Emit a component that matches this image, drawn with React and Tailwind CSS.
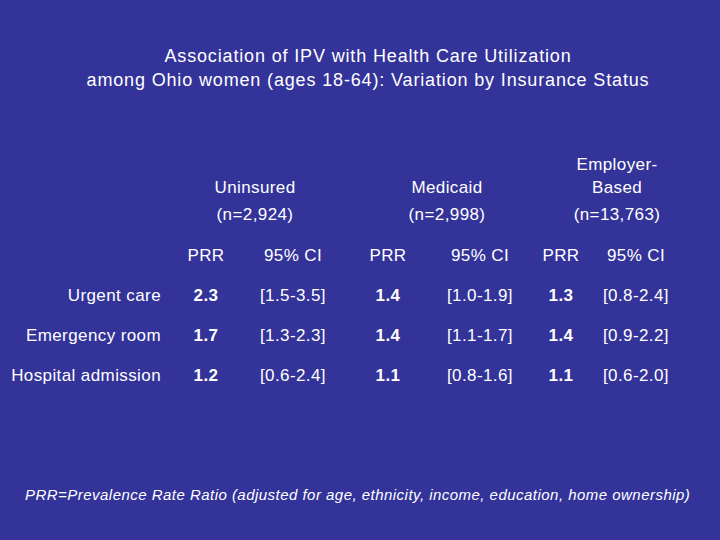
import React from 'react'

const rows = [
  ['Urgent care', '2.3', '[1.5-3.5]', '1.4', '[1.0-1.9]', '1.3', '[0.8-2.4]'],
  ['Emergency room', '1.7', '[1.3-2.3]', '1.4', '[1.1-1.7]', '1.4', '[0.9-2.2]'],
  ['Hospital admission', '1.2', '[0.6-2.4]', '1.1', '[0.8-1.6]', '1.1', '[0.6-2.0]'],
]

const cols = 'grid grid-cols-[170px_72px_102px_88px_96px_66px_84px]'

export default function App() {
  return (
    <div className="w-[720px] h-[540px] bg-[#333399] text-white font-['Liberation_Sans',Arial,sans-serif] overflow-hidden">
      {/* Title */}
      <div className="pt-[44px] pl-[16px] text-center text-[18px] leading-[24px] tracking-[0.85px]">
        <div>Association of IPV with Health Care Utilization</div>
        <div>among Ohio women (ages 18-64): Variation by Insurance Status</div>
      </div>

      {/* Group headers */}
      <div className="mt-[61px] flex items-end text-[17px] leading-[23px] tracking-[0.4px] text-center">
        <div className="w-[170px]" />
        <div className="w-[170px]">Uninsured</div>
        <div className="w-[214px]">Medicaid</div>
        <div className="w-[126px]">
          <div>Employer-</div>
          <div>Based</div>
        </div>
      </div>
      <div className="flex h-[32px] items-center text-[17px] tracking-[0.4px] text-center">
        <div className="w-[170px]" />
        <div className="w-[170px]">(n=2,924)</div>
        <div className="w-[214px]">(n=2,998)</div>
        <div className="w-[126px]">(n=13,763)</div>
      </div>

      {/* Column headers */}
      <div className={`${cols} mt-[5px] h-[40px] items-center text-center text-[17px] tracking-[0.4px]`}>
        <div />
        <div>PRR</div>
        <div>95% CI</div>
        <div>PRR</div>
        <div>95% CI</div>
        <div>PRR</div>
        <div>95% CI</div>
      </div>

      {/* Data */}
      {rows.map((r) => (
        <div key={r[0]} className={`${cols} h-[40px] items-center text-center text-[17px] tracking-[0.4px]`}>
          <div className="text-right pr-[9px] whitespace-nowrap">{r[0]}</div>
          <div className="font-bold">{r[1]}</div>
          <div>{r[2]}</div>
          <div className="font-bold">{r[3]}</div>
          <div>{r[4]}</div>
          <div className="font-bold">{r[5]}</div>
          <div>{r[6]}</div>
        </div>
      ))}

      {/* Footnote */}
      <div className="mt-[89px] pl-[25px] text-[15px] leading-[20px] italic tracking-[0.47px] whitespace-nowrap">
        PRR=Prevalence Rate Ratio (adjusted for age, ethnicity, income, education, home ownership)
      </div>
    </div>
  )
}
